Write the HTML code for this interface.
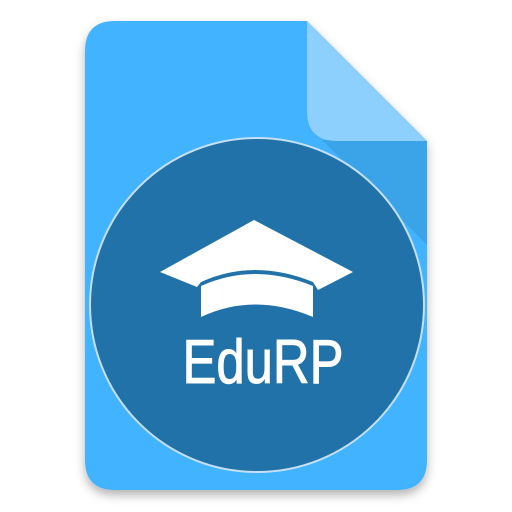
<!DOCTYPE html>
<html><head><style>
html,body{margin:0;padding:0;background:#fff;width:512px;height:512px;overflow:hidden}
</style></head><body>
<svg width="512" height="512" viewBox="0 0 512 512" xmlns="http://www.w3.org/2000/svg">
<defs>
<filter id="sh" x="-20%" y="-20%" width="140%" height="140%">
<feDropShadow dx="0" dy="5" stdDeviation="5" flood-color="#000" flood-opacity="0.3"/>
</filter>
</defs>
<path filter="url(#sh)" d="M115 21 H307 L427 141 V460 Q427 490 397 490 H115 Q85 490 85 460 V51 Q85 21 115 21 Z" fill="#42b3fe"/>
<path d="M322 140 L427 245 V141 Z" fill="#3ba4e8"/>
<path d="M307 21 L427 141 H337 Q307 141 307 111 Z" fill="#8dd0fe"/>
<circle cx="257" cy="305" r="167" fill="#2272aa" stroke="#c5dff3" stroke-width="2"/>
<path d="M254 220 L353 272 L318 290 L313 282 Q254 258 201 282 L197 287 L160 272 Z" fill="#fff"/>
<path d="M201 286 Q254 262 313 286 V317 Q254 292 201 317 Z" fill="#fff"/>
<text x="263" y="383" text-anchor="middle" font-family="Liberation Sans, sans-serif" font-size="62" fill="#fff" stroke="#fff" stroke-width="1" transform="translate(263 0) scale(0.82 1) translate(-263 0)">EduRP</text>
</svg>
</body></html>
